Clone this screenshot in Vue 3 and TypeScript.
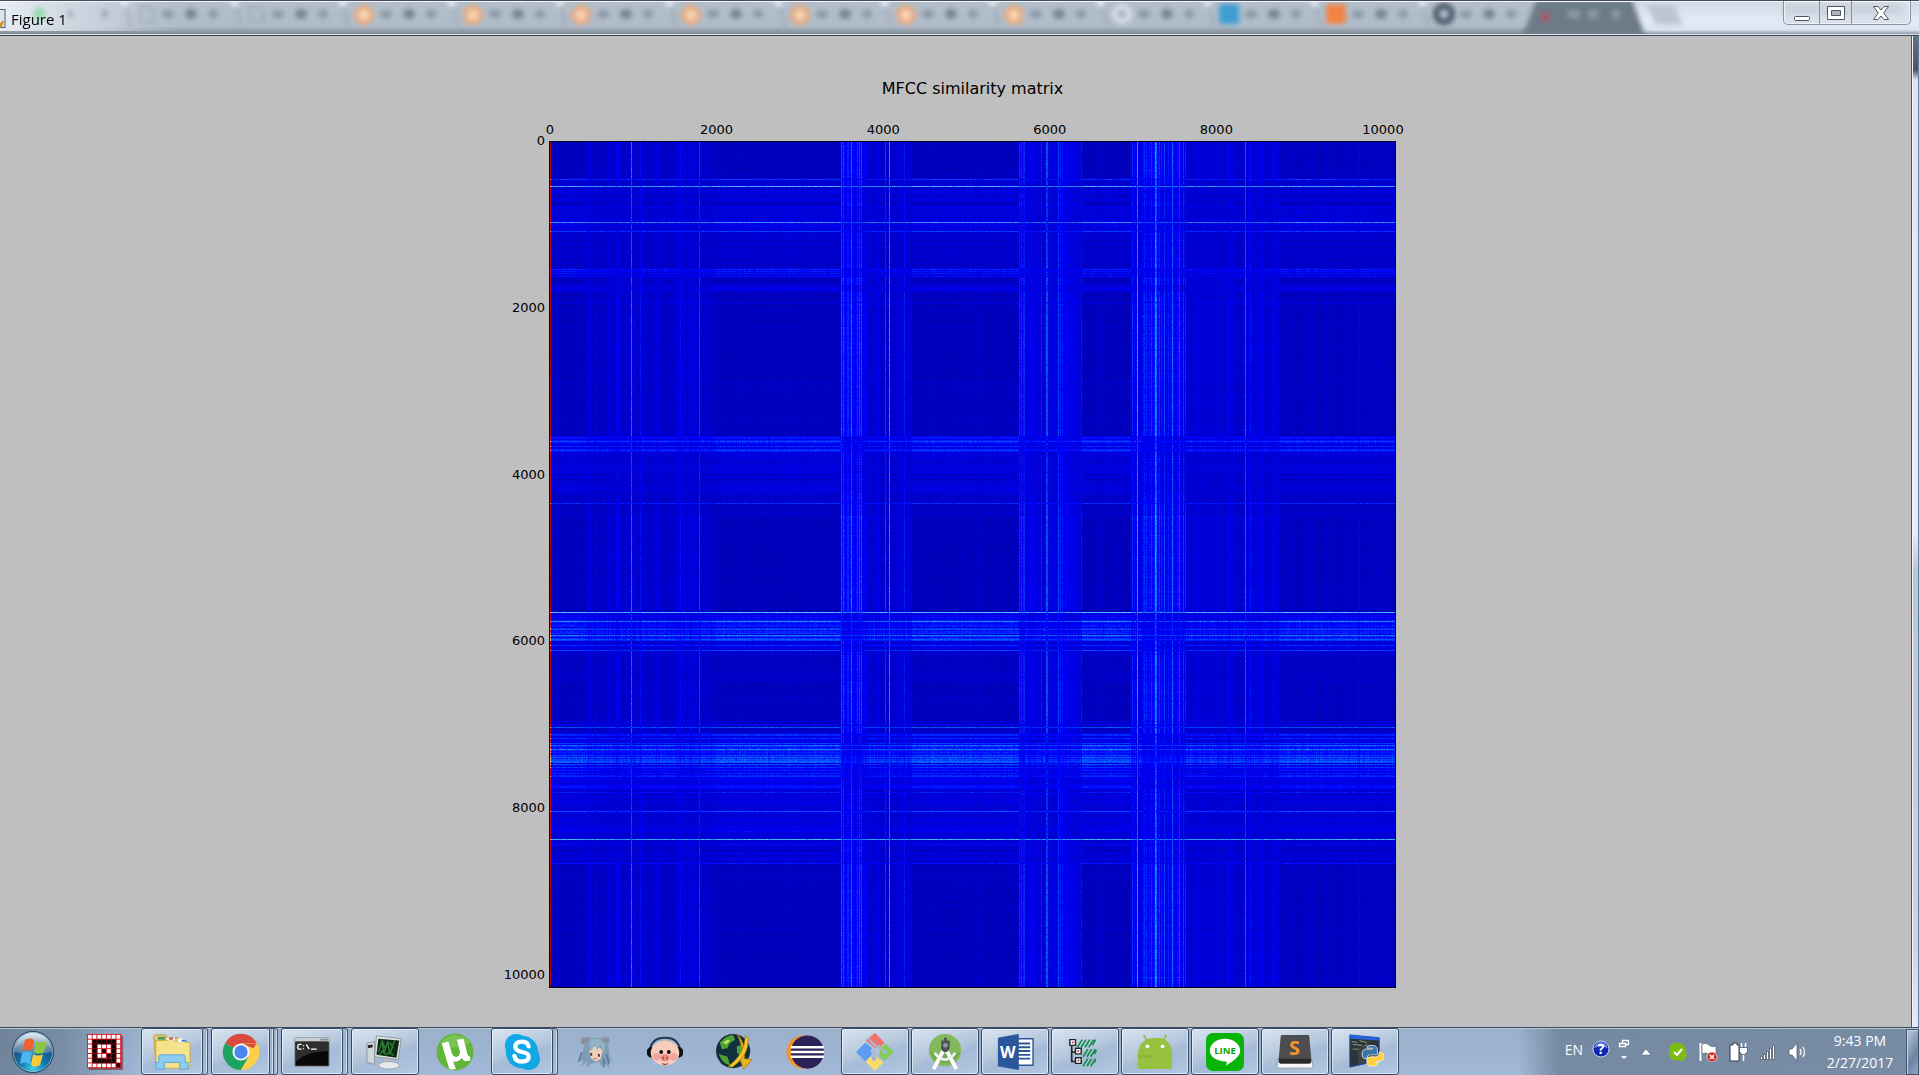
<script setup lang="ts">
import { onMounted, ref } from 'vue'

type Span = [start: number, end: number, level: number]
type Line = [position: number, level: number]

const SIZE = 845
const ticks = ['0', '2000', '4000', '6000', '8000', '10000']
const matrix = ref<HTMLCanvasElement | null>(null)

const columnSpans: Span[] = [
  [0, 37, 0.1], [37, 62, 0.3], [62, 90, 0.42], [90, 124, 0.22], [124, 150, 0.36], [150, 166, 0.2],
  [166, 291, 0.04], [291, 317, 0.8], [317, 334, 0.36], [334, 362, 0.4], [362, 469, 0.06],
  [469, 475, 0.95], [475, 490, 0.55], [490, 532, 0.52], [532, 581, 0.08], [581, 592, 0.4],
  [592, 635, 0.85], [635, 668, 0.36], [668, 727, 0.42], [727, 845, 0.14],
]
const columnLines: Line[] = [
  [38, 0.9], [45, 0.8], [55, 0.7], [66, 0.85], [81, 1.6], [85, 0.9], [90, 1.05], [106, 0.7],
  [130, 1], [140, 0.8], [149, 1.35], [161, 0.7], [191, 0.25], [291, 1.5], [293, 1.4], [297, 1.2],
  [301, 1.6], [307, 1.3], [309, 1.4], [311, 1.4], [335, 1.35], [339, 1.8], [346, 0.7], [354, 1.15],
  [359, 0.7], [414, 0.3], [445, 0.3], [469, 1.25], [471, 1.25], [473, 1.2], [484, 0.9], [491, 1.15],
  [496, 1.5], [497, 1.4], [508, 1.4], [510, 1.2], [512, 1.1], [516, 1], [520, 0.9], [531, 1.1],
  [582, 1.25], [584, 1], [587, 1.85], [594, 1.25], [596, 1.2], [601, 1.25], [605, 1.8], [606, 1.6],
  [609, 1.3], [614, 1.4], [622, 1.65], [626, 0.9], [633, 1.3], [635, 1.2], [658, 0.7], [668, 0.65],
  [678, 0.7], [682, 0.8], [695, 1.55], [700, 1.1], [710, 0.7], [723, 0.95], [727, 0.5], [744, 0.4],
  [752, 0.35], [776, 0.35], [809, 0.65],
]
const rowSpans: Span[] = [
  [0, 36, 0.08], [36, 64, 0.36], [64, 76, 0.42], [76, 90, 0.55], [90, 126, 0.3], [126, 135, 0.55],
  [135, 143, 0.18], [143, 150, 0.5], [150, 160, 0.08], [160, 240, 0.06], [240, 294, 0.08],
  [294, 305, 0.85], [305, 312, 0.75], [312, 330, 0.5], [330, 362, 0.36], [362, 374, 0.15],
  [374, 470, 0.03], [470, 486, 0.75], [486, 499, 1.05], [499, 510, 0.5], [510, 540, 0.18],
  [540, 579, 0.06], [579, 591, 0.2], [591, 612, 0.9], [612, 620, 1.05], [620, 645, 0.8],
  [645, 669, 0.45], [669, 697, 0.44], [697, 722, 0.38], [722, 748, 0.14], [748, 845, 0.06],
]
const rowLines: Line[] = [
  [37, 1.3], [44, 2], [50, 0.8], [57, 0.7], [65, 0.85], [80, 1.85], [84, 0.95], [89, 1.35],
  [94, 0.6], [103, 0.55], [109, 0.5], [127, 1.2], [129, 1.1], [134, 1.05], [147, 0.7], [160, 0.9],
  [256, 0.3], [307, 1.2], [309, 1.1], [330, 0.7], [346, 0.8], [361, 1.25], [372, 0.6], [470, 2.15],
  [475, 1.1], [479, 1.75], [480, 1.2], [487, 1.5], [491, 1.25], [494, 1.3], [497, 1.5], [498, 1.35],
  [503, 1.25], [508, 1.4], [512, 0.7], [579, 0.7], [582, 0.95], [585, 1.5], [592, 1.25], [593, 1.2],
  [601, 1.35], [604, 1.2], [607, 1.7], [614, 1.2], [617, 1.45], [618, 1.4], [619, 1.55], [631, 1.2],
  [633, 1.2], [645, 1.1], [650, 1.15], [654, 0.8], [669, 1.45], [678, 0.8], [697, 2.05], [702, 1],
  [711, 0.95], [721, 1.1], [746, 0.28], [805, 0.22], [835, -0.15],
]

function createRandom(seed: number): () => number {
  let state = seed
  return () => {
    state = (state * 1664525 + 1013904223) >>> 0
    return state / 4294967296
  }
}

function profile(spans: Span[], lines: Line[], random: () => number): number[] {
  const values: number[] = new Array(SIZE).fill(0)
  for (const [start, end, level] of spans) {
    for (let i = start; i < end; i++) {
      const spike = Math.pow(random(), 4) * (0.16 + level * 0.5)
      values[i] = level + spike + (random() - 0.5) * (0.16 + level * 0.5)
    }
  }
  for (const [position, level] of lines) values[position] = level
  return values
}

function drawMatrix(canvas: HTMLCanvasElement): void {
  const context = canvas.getContext('2d')
  if (!context) return
  const random = createRandom(27)
  const columns = profile(columnSpans, columnLines, random)
  const rows = profile(rowSpans, rowLines, random)
  const image = context.createImageData(SIZE, SIZE)
  for (let y = 0; y < SIZE; y++) {
    for (let x = 0; x < SIZE; x++) {
      const spread = Math.abs(columns[x] - rows[y])
      const shared = Math.min(Math.max(columns[x], 0), Math.max(rows[y], 0))
      const value = spread + shared * 0.56 + (random() - 0.5) * (0.08 + spread * 0.16)
      const over = Math.max(0, value - 0.95)
      const offset = (y * SIZE + x) * 4
      let red = Math.max(0, (over - 0.5) * 110)
      let green = Math.min(210, over * 165)
      let blue = Math.min(255, 180 + value * 78)
      if (x === 0) {
        red = 175 + rows[y] * 40
        green = rows[y] > 1.2 ? 200 : 0
        blue = 10 + rows[y] * 60
      }
      image.data[offset] = red
      image.data[offset + 1] = green
      image.data[offset + 2] = blue
      image.data[offset + 3] = 255
    }
  }
  context.putImageData(image, 0, 0)
}

onMounted(() => {
  if (matrix.value) drawMatrix(matrix.value)
})

type TabKind = 'page' | 'round' | 'white' | 'blue' | 'square' | 'cat'
const tabs: { x: number; kind: TabKind }[] = [
  { x: 124, kind: 'page' }, { x: 234, kind: 'page' }, { x: 342, kind: 'round' },
  { x: 451, kind: 'round' }, { x: 559, kind: 'round' }, { x: 669, kind: 'round' },
  { x: 778, kind: 'round' }, { x: 884, kind: 'round' }, { x: 992, kind: 'round' },
  { x: 1100, kind: 'white' }, { x: 1207, kind: 'blue' }, { x: 1314, kind: 'square' },
  { x: 1422, kind: 'cat' },
]

type AppState = 'pinned' | 'open' | 'stack' | 'triple'
const apps: { id: string; name: string; state: AppState }[] = [
  { id: 'grid', name: 'Pixel grid', state: 'pinned' },
  { id: 'explorer', name: 'Windows Explorer', state: 'stack' },
  { id: 'chrome', name: 'Google Chrome', state: 'triple' },
  { id: 'cmd', name: 'Command Prompt', state: 'stack' },
  { id: 'monitor', name: 'System Monitor', state: 'open' },
  { id: 'torrent', name: 'uTorrent', state: 'pinned' },
  { id: 'skype', name: 'Skype', state: 'stack' },
  { id: 'girl', name: 'Mascot', state: 'pinned' },
  { id: 'pig', name: 'Music player', state: 'pinned' },
  { id: 'globe', name: 'Download manager', state: 'pinned' },
  { id: 'eclipse', name: 'Eclipse', state: 'pinned' },
  { id: 'git', name: 'Git', state: 'open' },
  { id: 'studio', name: 'Android Studio', state: 'open' },
  { id: 'word', name: 'Word', state: 'open' },
  { id: 'tree', name: 'Tree compare', state: 'open' },
  { id: 'android', name: 'Android', state: 'open' },
  { id: 'line', name: 'LINE', state: 'open' },
  { id: 'sublime', name: 'Sublime Text', state: 'open' },
  { id: 'python', name: 'Python', state: 'open' },
]

const gridPattern = ['wwwwwww', 'wkkkkkw', 'wkwwwkw', 'wkwkwkw', 'wkwwkkw', 'wkkkkkw', 'wwwwwwk']
const gridDots = gridPattern.flatMap((row, y) =>
  [...row].map((cell, x) => ({ x: x * 5, y: y * 5, fill: cell === 'w' ? '#fff' : '#160406' })),
)
</script>

<template>
  <div class="desktop">
    <header class="titlebar">
      <svg class="glass" viewBox="0 2 1919 33" preserveAspectRatio="xMinYMin slice" aria-hidden="true">
        <defs>
          <filter id="soft" x="-20%" y="-20%" width="140%" height="140%"><feGaussianBlur stdDeviation="2.4" /></filter>
          <filter id="softer" x="-20%" y="-50%" width="140%" height="200%"><feGaussianBlur stdDeviation="2" /></filter>
          <linearGradient id="tabFill" x1="0" x2="0" y1="0" y2="1">
            <stop offset="0" stop-color="#b2bfcb" /><stop offset=".75" stop-color="#b0bcc9" /><stop offset="1" stop-color="#78848f" />
          </linearGradient>
          <linearGradient id="leftGlow"><stop offset="0" stop-color="#e8edf6" /><stop offset=".6" stop-color="#ccd4de" stop-opacity=".7" /><stop offset="1" stop-color="#b2bfcb" stop-opacity="0" /></linearGradient>
          <linearGradient id="rightGlow" x1="0" x2="0" y1="0" y2="1"><stop offset="0" stop-color="#cfd8e4" /><stop offset=".6" stop-color="#e4ebf7" /><stop offset=".85" stop-color="#dbe4f0" /><stop offset="1" stop-color="#7d8b9a" /></linearGradient>
          <radialGradient id="roundFill"><stop offset="0" stop-color="#fff3de" /><stop offset=".4" stop-color="#f2c6a2" /><stop offset="1" stop-color="#e79c6c" /></radialGradient>
        </defs>
        <rect width="1919" height="35" fill="url(#tabFill)" />
        <rect width="190" height="31" fill="url(#leftGlow)" />
        <rect x="1630" width="289" height="35" fill="url(#rightGlow)" />
        <g filter="url(#soft)">
          <path d="M1522 38 L1536 0 H1632 L1646 38Z" fill="#6d7a88" />
          <path d="M1646 5 H1674 L1683 25 H1656Z" fill="#bcc6d3" />
          <ellipse cx="39" cy="14" rx="6" ry="7" fill="#9adcb0" />
          <rect x="68" y="10" width="4" height="8" fill="#9ba6b1" />
          <rect x="102" y="10" width="6" height="8" fill="#9ba6b1" />
          <g v-for="tab in tabs" :key="tab.x" :transform="`translate(${tab.x} 0)`">
            <path d="M-5 0 H6 L1 8Z" fill="#eef3fb" />
            <path d="M2 6 L7 28" stroke="#98a5b3" stroke-width="2" />
            <circle v-if="tab.kind === 'round'" cx="22" cy="15" r="10" fill="url(#roundFill)" />
            <circle v-else-if="tab.kind === 'white'" cx="22" cy="14" r="10" fill="#d8deea" />
            <path v-else-if="tab.kind === 'page'" d="M16 7 H25 L29 11 V22 H16Z" fill="none" stroke="#9aa7b4" stroke-width="2" />
            <circle v-else-if="tab.kind === 'cat'" cx="22" cy="14" r="8" fill="none" stroke="#4c5967" stroke-width="6" />
            <rect v-else x="12" y="4" width="20" height="20" rx="3" :fill="tab.kind === 'blue' ? '#3c9dd3' : '#f28445'" />
            <ellipse v-if="tab.kind === 'white'" cx="22" cy="14" rx="4" ry="4" fill="#9ba7b6" />
            <ellipse cx="44" cy="14" rx="6" ry="4" fill="#8895a2" />
            <ellipse cx="67" cy="14" rx="6" ry="5" fill="#76838f" />
            <ellipse cx="89" cy="14" rx="5" ry="4" fill="#8895a2" />
          </g>
          <circle cx="1545" cy="17" r="4" fill="#b24a5c" />
          <path d="M1568 14 H1580 M1588 14 H1598 M1612 14 H1620" stroke="#8d99a5" stroke-width="8" />
          <rect x="1783" y="2" width="120" height="12" fill="#c1cbd7" />
        </g>
        <path d="M1717 8 H1745 M1754 8 H1779" stroke="#8894a3" stroke-width="9" filter="url(#softer)" />
      </svg>
      <svg class="app-icon" viewBox="0 0 6 20" aria-hidden="true">
        <rect x="-8" y=".5" width="13" height="18" fill="#dfe3e6" stroke="#43637e" />
        <path d="M-2 11 L1 17 L3 12" fill="none" stroke="#d98a12" stroke-width="2" />
      </svg>
      <h1>Figure 1</h1>
      <div class="controls">
        <button type="button" class="minimize" aria-label="Minimize">
          <svg viewBox="0 0 18 18" aria-hidden="true"><rect x="1.5" y="12.500" width="15" height="4" rx="1" fill="#fff" stroke="#4d5661" /></svg>
        </button>
        <button type="button" class="maximize" aria-label="Maximize">
          <svg viewBox="0 0 18 18" aria-hidden="true"><path d="M.5 2.500h17v13H.5z" fill="#fff" stroke="#4d5661" /><path d="M4.500 6.500h9v5h-9z" fill="#a9b5c2" stroke="#4d5661" /></svg>
        </button>
        <button type="button" class="close" aria-label="Close">
          <svg viewBox="0 0 18 18" aria-hidden="true"><path d="M1.500 2.500h4.500l3 3.500 3-3.500h4.500l-4.800 6.500 4.800 6.500H12l-3-3.500-3 3.500H1.500L6.300 9z" fill="#fff" stroke="#4d5661" /></svg>
        </button>
      </div>
    </header>

    <main class="window">
      <figure class="figure">
        <figcaption>MFCC similarity matrix</figcaption>
        <div class="x-axis"><span v-for="tick in ticks" :key="tick">{{ tick }}</span></div>
        <div class="y-axis"><span v-for="tick in ticks" :key="tick">{{ tick }}</span></div>
        <canvas ref="matrix" class="matrix" :width="SIZE" :height="SIZE" role="img" aria-label="MFCC similarity matrix"></canvas>
      </figure>
      <div class="edge"></div>
    </main>

    <footer class="taskbar">
      <button type="button" class="start" aria-label="Start">
        <svg viewBox="0 0 44 44" aria-hidden="true">
          <defs>
            <radialGradient id="orb" cx=".5" cy=".9" r=".9"><stop offset="0" stop-color="#3cd0e8" /><stop offset=".35" stop-color="#0c76ad" /><stop offset=".7" stop-color="#1c4f7c" /><stop offset="1" stop-color="#9ab9cf" /></radialGradient>
            <linearGradient id="orbShine" x1="0" x2="0" y1="0" y2="1"><stop offset="0" stop-color="#fff" stop-opacity=".75" /><stop offset="1" stop-color="#fff" stop-opacity=".2" /></linearGradient>
          </defs>
          <circle cx="22" cy="22" r="20.500" fill="url(#orb)" stroke="#213e5a" />
          <circle cx="22" cy="22" r="19.500" fill="none" stroke="#a9cbe0" opacity=".7" />
          <path d="M3 22A19 19 0 0 1 41 22Q22 26 3 22Z" fill="url(#orbShine)" />
          <path d="M14 10q5-3 9 0l-2 11q-5-3-10 0z" fill="#f0602a" />
          <path d="M25 11q5 3 11 0l-3 11q-5 3-10 0z" fill="#8fc63d" />
          <path d="M11 23q5-3 10 0l-2 11q-5-3-10 0z" fill="#4fb5ee" />
          <path d="M22 24q5 3 10 0l-3 11q-5 3-9 0z" fill="#fcc93a" />
        </svg>
      </button>

      <nav class="apps" aria-label="Running programs">
        <button v-for="app in apps" :key="app.id" type="button" :class="['app', app.state]" :aria-label="app.name">
          <span class="face">
            <svg viewBox="0 0 40 40" aria-hidden="true">
              <g v-if="app.id === 'grid'">
                <path d="M3 3h36v36H3z" fill="#6b2a33" opacity=".6" /><path d="M1 1h36v36H1z" fill="#d9141c" />
                <rect v-for="(dot, i) in gridDots" :key="i" :x="dot.x + 2" :y="dot.y + 2" width="4" height="4" :fill="dot.fill" />
                <path d="M7 7h24v5H7zM7 27h24v5H7zM7 7h5v24H7zM27 7h5v24h-5z" fill="#160406" opacity=".65" />
              </g>
              <g v-else-if="app.id === 'explorer'">
                <path d="M1 4q0-2 2-2h10l3 3h10v30H3z" fill="#e8cf6c" stroke="#b99b3c" /><path d="M5 4h8v3H5z" fill="#4d9a63" />
                <path d="M13 8h11l3 2h12v27H3V8z" fill="#f6e28a" stroke="#c9ab4a" /><path d="M15 5h8v3h-8z" fill="#fff" /><path d="M17 5h4v2h-4z" fill="#c8463c" /><path d="M26 6h8v4h-8z" fill="#fff" /><path d="M30 7h5v2h-5z" fill="#3b79b8" />
                <path d="M3 38V31h3v-6q0-2 2-2h24q2 0 2 2v6h3v7h-9v-7H12v7z" fill="#8ecdf0" stroke="#5ba7d6" />
              </g>
              <g v-else-if="app.id === 'chrome'">
                <circle cx="20" cy="20" r="19" fill="#fbd04b" /><path d="M20 20L3.500 10.500A19 19 0 0 1 36.500 10.500H20Z" fill="#db4a3e" /><path d="M20 20L3.500 10.500A19 19 0 0 0 20 39L28 25Z" fill="#1fa363" />
                <path d="M20 39L28.500 24.500 36.500 10.500A19 19 0 0 1 20 39Z" fill="#fbd04b" /><path d="M20 11H36.500L33 16Z" fill="#db4a3e" /><circle cx="20" cy="20" r="9" fill="#f5f7fb" /><circle cx="20" cy="20" r="7" fill="#4a86ee" />
              </g>
              <g v-else-if="app.id === 'cmd'">
                <path d="M2 5h36v30H2z" fill="#080808" stroke="#90979f" /><path d="M2 5h36v4H2z" fill="#c9ced4" /><path d="M29 6h2v2h-2zM32 6h2v2h-2zM35 6h2v2h-2z" fill="#707780" />
                <path d="M3 9h34v10Q15 19 3 30z" fill="#4a4a4a" opacity=".6" />
                <path d="M9 12H7q-2 0-2 2v1q0 2 2 2h2M11 13v1M11 16v1M14 12l3 5M19 17h6" fill="none" stroke="#fff" stroke-width="1.400" />
              </g>
              <g v-else-if="app.id === 'monitor'">
                <path d="M1 11l8-2v24l-8-2z" fill="#d2d7db" stroke="#8d959c" /><path d="M2 13l5-1v3l-5 1z" fill="#222" /><path d="M11 3l26 3-3 22-25-3z" fill="#dfe3e6" stroke="#8d959c" /><path d="M13 6l22 2-3 18-21-3z" fill="#0c2814" />
                <path d="M13 20l4-11 2 12 4-12 2 13 5-14M14 23l3-4 4 4 4-3 4 4M17 8l3 8M25 10l4 6" fill="none" stroke="#2b7d33" stroke-width="1.500" /><path d="M19 27l6 1v5h-6z" fill="#b7bdc2" /><ellipse cx="24" cy="34" rx="11" ry="4" fill="#e6e9eb" stroke="#9ba3aa" />
              </g>
              <g v-else-if="app.id === 'torrent'">
                <circle cx="20" cy="20" r="19.500" fill="#62b43b" /><path d="M4 11A19.500 19.500 0 0 1 36 10Q20 20 4 11Z" fill="#8bcc62" opacity=".6" />
                <path d="M6 11l7-2 4 13q2 4 5 3 4-1 3-6l-3-12 7-1 4 16q1 3 3 3v4q-7 2-9-3-3 5-9 4l3 8q-4 1-7 0z" fill="#fff" />
              </g>
              <g v-else-if="app.id === 'skype'">
                <circle cx="14" cy="13" r="12" fill="#12a8e6" /><circle cx="27" cy="27" r="12" fill="#12a8e6" /><circle cx="20" cy="20" r="17" fill="#12a8e6" />
                <path d="M27 14q-1-5-7-5-7 0-7 5.500 0 4 7 5.500 7 1 7 5 0 5-7 5-7 0-8-6" fill="none" stroke="#fff" stroke-width="4.500" stroke-linecap="round" />
              </g>
              <g v-else-if="app.id === 'girl'">
                <path d="M6 5l9-1-1 7-9 1zM28 4l7 1v6l-6-1z" fill="#8a919b" /><path d="M9 13Q14 4 22 5q9 0 12 9l2 12 3 5-5-2 1 8-5-6-2 5-4-6-7 2-6 4 1-6-6 5 2-7-7 3 5-7z" fill="#7e9db4" />
                <path d="M14 19q3-5 7-5t7 5l-2 8-5 3-5-3z" fill="#efd0b9" /><path d="M11 20l4-9 1 9 4-9 2 8 4-7 3 9 2-9-7-6-9 1z" fill="#94b3c7" /><path d="M16 21v3M24 22v3" stroke="#4e3530" stroke-width="2" /><path d="M18 27h4" stroke="#d16955" />
                <path d="M6 20l-3 10M32 22l3 11M29 27l1 9" stroke="#557a97" stroke-width="1.500" />
              </g>
              <g v-else-if="app.id === 'pig'">
                <path d="M4 18Q6 5 20 5t16 13" fill="none" stroke="#23354c" stroke-width="2" /><path d="M1 18q2-4 6-3v11q-5 0-6-4zM39 18q-2-4-6-3v11q5 0 6-4z" fill="#111" />
                <ellipse cx="20" cy="21" rx="15" ry="13" fill="#f7cdbd" /><circle cx="11" cy="25" r="4" fill="#f2a59c" /><circle cx="29" cy="25" r="4" fill="#f2a59c" /><ellipse cx="20" cy="26" rx="5" ry="4" fill="#ef8b82" />
                <path d="M18 25v3M22 25v3M17 32q3 2 6 0" stroke="#a03b36" fill="none" stroke-width="1.300" /><circle cx="16" cy="20" r="2" fill="#111" /><circle cx="24" cy="20" r="2" fill="#111" />
              </g>
              <g v-else-if="app.id === 'globe'">
                <circle cx="18" cy="19" r="18" fill="#12303c" /><path d="M4 10q7-8 14-8l2 5-6 4-2 5-6 1zM3 22l9 3 3 9q-9-2-12-12zM22 14l7-2 3 7-5 5-5-3z" fill="#4fa037" />
                <path d="M7 10l5-3 3 1-4 4z" fill="#b7e05a" /><path d="M22 1q9 8 8 26l8 1-9 10-4-11 3-1Q28 12 22 1z" fill="#eab51c" stroke="#a8780d" stroke-width=".8" /><path d="M31 3q-1 20-18 32l4 1Q35 24 34 5z" fill="#f3c52d" stroke="#a8780d" stroke-width=".8" />
              </g>
              <g v-else-if="app.id === 'eclipse'">
                <circle cx="18" cy="20" r="17.500" fill="#f3952b" /><circle cx="22.500" cy="20" r="17.500" fill="#2d2257" /><path d="M5 15h35M5 20h35M5 25h35" stroke="#fff" stroke-width="2.500" />
              </g>
              <g v-else-if="app.id === 'git'">
                <path d="M20 0l10 10-6 6q-2-2-4 0l-10-8z" fill="#f4706c" /><path d="M31 11l9 9-10 9-6-5q3-3 0-6z" fill="#82ce55" /><path d="M20 24l3 2 6 5-9 9-10-10 5-5q3 2 5-1z" fill="#f7dc6c" /><path d="M10 10l7 6q-3 3 0 6l-7 8L0 20z" fill="#5c9cf3" />
                <path d="M13 6l10 10M19 17v11M23 13l7 7" stroke="#a7b7c9" stroke-width="2.500" /><circle cx="19" cy="27" r="2.500" fill="#a7b7c9" /><circle cx="30" cy="20" r="2.500" fill="#a7b7c9" />
              </g>
              <g v-else-if="app.id === 'studio'">
                <circle cx="20" cy="18" r="17" fill="#83b95a" /><path d="M4 20q16 7 32 0A17 17 0 0 1 4 20z" fill="#6ea846" /><path d="M19 17L8 38M21 17l11 21" stroke="#fff" stroke-width="4" /><path d="M9 21q11 14 22 0" fill="none" stroke="#eef2f4" stroke-width="3" />
                <path d="M16 8h3V5h3v3h3v6q0 4-3 6h-3q-4-2-3-6z" fill="#4f5357" /><circle cx="20.500" cy="13" r="2.500" fill="#949a9e" />
              </g>
              <g v-else-if="app.id === 'word'">
                <path d="M20 6h19v28H20z" fill="#fff" stroke="#2b569a" stroke-width="1.500" /><path d="M23 11h13M23 15h13M23 19h13M23 23h13M23 27h13" stroke="#2b569a" stroke-width="2" /><path d="M2 5l22-4v38L2 35z" fill="#2b579a" />
                <text x="12.500" y="26" text-anchor="middle" class="glyph word-letter">W</text>
              </g>
              <g v-else-if="app.id === 'tree'">
                <path d="M6 12v18h8M6 20h8" fill="none" stroke="#20262b" stroke-width="1.800" /><path d="M12 15l5-8M16 15l5-8M20 15l5-8M24 15l5-8M28 13l3-6M18 25l5-8M22 25l5-8M26 25l5-8M30 22l2-4M18 35l5-8M22 35l5-8M26 35l5-8M30 31l1-3" stroke="#1c8c4f" stroke-width="1.800" />
                <path d="M4 7h6v6H4zM10 16h6v6h-6zM10 26h6v6h-6z" fill="#fff" stroke="#20262b" stroke-width="1.500" /><path d="M6.500 9.500h1v1h-1zM12.500 18.500h1v1h-1zM12.500 28.500h1v1h-1z" fill="#b22b2b" stroke="#b22b2b" />
              </g>
              <g v-else-if="app.id === 'android'">
                <path d="M8 2l4 7M32 2l-4 7" stroke="#8cba3a" stroke-width="1.500" /><path d="M2 22Q3 6 20 5t18 17v14q0 2-2 2H4q-2 0-2-2z" fill="#96c23f" /><path d="M2 23h18l-3 3H2z" fill="#85ad3b" opacity=".6" /><circle cx="12" cy="14" r="2" fill="#fff" /><circle cx="28" cy="14" r="2" fill="#fff" />
              </g>
              <g v-else-if="app.id === 'line'">
                <rect width="40" height="40" rx="7" fill="#08b408" /><path d="M20 6c9 0 16 5.500 16 12.500 0 6-6 10-15 16 1-2 1-4 0-4.500C11 30 4 25 4 18.500 4 11.500 11 6 20 6z" fill="#fff" /><text x="20" y="22" text-anchor="middle" class="glyph line-word">LINE</text>
              </g>
              <g v-else-if="app.id === 'sublime'">
                <path d="M3 26h34l2 9q0 2-2 2H3q-2 0-2-2z" fill="#f4f6f7" stroke="#8f989f" /><path d="M5 3q0-1 2-1h26q2 0 2 1l2 23v4q0 2-2 2H5q-2 0-2-2v-4z" fill="#4d4d4f" /><path d="M3 27h34v3q0 2-2 2H5q-2 0-2-2z" fill="#29292b" />
                <text x="19.500" y="23" text-anchor="middle" class="glyph sublime-letter">S</text>
              </g>
              <g v-else-if="app.id === 'python'">
                <path d="M4 2l31 3v24L4 36z" fill="#2b333b" stroke="#2450b3" /><path d="M4 2l31 3v3L4 6z" fill="#2a62e0" /><path d="M6 9l6 1M14 8l8 2M7 12l10 1M20 13l6 1M7 17h6" stroke="#9fa06a" /><path d="M12 17l12-9v23l-11 2z" fill="#5c6c74" opacity=".3" />
                <path d="M27 13q6 0 6 4v6h-8q-3 0-3 4h-2q-3 0-3-5t4-5h7v-1h-6q0-3 5-3z" fill="#3a74a8" stroke="#eef3f7" stroke-width=".8" /><path d="M28 35q-6 0-6-4v-3q0-3 4-3h5q4 0 4-5h2q3 1 3 5t-4 5h-5v1h3q0 4-6 4z" fill="#ffd03f" stroke="#eef3f7" stroke-width=".8" />
              </g>
            </svg>
          </span>
        </button>
      </nav>

      <div class="tray">
        <button type="button" class="language">EN</button>
        <button type="button" aria-label="Help" class="help">
          <svg width="18" height="18" viewBox="0 0 18 18" aria-hidden="true"><circle cx="9" cy="9" r="8" fill="#1226b4" stroke="#c9d4ea" /><path d="M2 8Q4 2 9 2t7 6Q9 5 2 8z" fill="#6f87ea" /><text x="9" y="14" text-anchor="middle" class="glyph help-mark">?</text></svg>
        </button>
        <button type="button" aria-label="Language bar options" class="options">
          <svg width="12" height="24" viewBox="0 0 12 24" aria-hidden="true"><path d="M4.500 4V1.500h6v4H8M1.500 4.500h6v3h-6z" fill="none" stroke="#fff" stroke-width="1.300" /><path d="M3 17h6l-3 3z" fill="#fff" /></svg>
        </button>
        <button type="button" aria-label="Show hidden icons" class="more">
          <svg width="12" height="8" viewBox="0 0 12 8" aria-hidden="true"><path d="M1 7l5-6 5 6z" fill="#fff" stroke="#59687a" stroke-width=".6" /></svg>
        </button>
        <button type="button" aria-label="Skype: online">
          <svg width="20" height="20" viewBox="0 0 20 20" aria-hidden="true"><path d="M6 1q5-1 8 1 5 3 4 8 2 5-2 8-3 2-7 0-5 1-7-3-2-3-1-6-1-6 5-8z" fill="#7cbb16" /><path d="M6 10l3 3 5-6" fill="none" stroke="#fff" stroke-width="2" /></svg>
        </button>
        <button type="button" aria-label="Action center">
          <svg width="20" height="20" viewBox="0 0 20 20" aria-hidden="true"><path d="M2.500 1v18" stroke="#fff" stroke-width="2" /><path d="M4 2q4-2 7 1t7 1v9q-4 1-7-1t-7 0z" fill="#fff" stroke="#4a5867" stroke-width=".6" /><circle cx="14" cy="15" r="5" fill="#d92c25" stroke="#fff" stroke-width=".6" /><path d="M12 13l4 4M16 13l-4 4" stroke="#fff" stroke-width="1.600" /></svg>
        </button>
        <button type="button" aria-label="Power">
          <svg width="20" height="20" viewBox="0 0 20 20" aria-hidden="true"><path d="M5 1h4v2h2v16H2V3h3z" fill="#fff" stroke="#323d49" /><path d="M13.500 1v5M17.500 1v5M15.500 12v7" stroke="#fff" stroke-width="1.500" /><path d="M11.500 5.500h8v4l-2.500 3h-3l-2.500-3z" fill="#fff" stroke="#465462" stroke-width=".8" /></svg>
        </button>
        <button type="button" aria-label="Network">
          <svg width="20" height="20" viewBox="0 0 20 20" aria-hidden="true"><path d="M2.500 14.500h2v3h-2zM5.500 12.500h2v5h-2zM8.500 9.500h2v8h-2zM11.500 6.500h2v11h-2zM14.500 3.500h2v14h-2z" fill="#fff" stroke="#46525f" stroke-width=".7" /></svg>
        </button>
        <button type="button" aria-label="Volume">
          <svg width="20" height="20" viewBox="0 0 20 20" aria-hidden="true"><path d="M1 7h3l5-6v18l-5-6H1z" fill="#fff" stroke="#46525f" stroke-width=".7" /><path d="M12 7q2 3 0 6M15 5q3 5 0 10" fill="none" stroke="#e9eff4" stroke-width="1.400" /></svg>
        </button>
        <button type="button" class="clock"><time datetime="21:43">9:43 PM</time><time datetime="2017-02-27">2/27/2017</time></button>
        <button type="button" class="show-desktop" aria-label="Show desktop"></button>
      </div>
    </footer>
  </div>
</template>

<style>
body { margin: 0; background: #bfbfbf; }
</style>

<style scoped>
.desktop { min-height: 100vh; display: flex; flex-direction: column; box-sizing: border-box; overflow: hidden; font-family: "Open Sans", "Noto Sans", sans-serif; color: #000; }
button { border: 0; padding: 0; background: none; font: inherit; color: inherit; display: flex; align-items: center; justify-content: center; }
svg { display: block; }

.titlebar { position: relative; height: 36px; box-sizing: border-box; display: flex; align-items: flex-start; border-top: 1px solid #454b5a; border-bottom: 1px solid #3c4554; box-shadow: inset 0 1px #f3f6fb, inset 0 -1px #dbe2ea; }
.glass { position: absolute; inset: 1px 0 1px 0; width: 100%; height: 32px; }
.app-icon { position: relative; width: 6px; height: 20px; margin-top: 8px; }
h1 { position: relative; flex: 1; margin: 0; padding: 8px 0 0 5px; font-size: 15px; line-height: 20px; font-weight: 400; }
.controls { position: relative; display: flex; height: 23px; margin-right: 8px; border: 1px solid #8793a3; border-top: 0; border-radius: 0 0 5px 5px; box-shadow: inset 0 0 0 1px rgba(255, 255, 255, 0.6); background: linear-gradient(rgba(255, 255, 255, 0.25), rgba(190, 200, 214, 0.35)); }
.controls button { width: 32px; }
.controls button + button { border-left: 1px solid #8793a3; }
.controls .minimize { width: 35px; }
.controls .close { width: 59px; }
.controls svg { width: 18px; height: 18px; }

.window { flex: 1; display: flex; background: #bfbfbf; }
.figure { flex: 1; margin: 0; padding: 40px 0 20px; display: grid; grid-template-columns: 549fr 847px 515fr; grid-template-rows: 26px 39px auto; align-content: start; font-family: "DejaVu Sans", sans-serif; }
figcaption { grid-area: 1 / 2; text-align: center; font-size: 16px; line-height: 26px; }
.x-axis { grid-area: 2 / 2; display: flex; justify-content: space-between; align-items: flex-end; padding: 0 13px 3px 1px; font-size: 13px; line-height: 16px; }
.x-axis span { width: 0; display: flex; justify-content: center; }
.y-axis { grid-area: 3 / 1; display: flex; flex-direction: column; justify-content: space-between; padding: 0 4px 13px 0; font-size: 13px; line-height: 16px; }
.y-axis span { height: 0; display: flex; align-items: center; justify-content: flex-end; }
.matrix { grid-area: 3 / 2; display: block; border: 1px solid #000018; }
.edge { width: 6px; border-left: 1px solid #49566a; box-shadow: inset 1px 0 #f2f6fa; background: linear-gradient(#66727f, #4a5563 34px, #dce5f0 44px, #e6edf6 50%, #b9c6d8 54%, #cbd6e4 92%, #e4ebf5); border-right: 1px solid #68809c; }

.taskbar { height: 48px; box-sizing: border-box; display: flex; border-top: 1px solid #3b4c61; box-shadow: inset 0 1px #b9c8d9; background: linear-gradient(90deg, rgba(104, 123, 146, 0.85), rgba(104, 123, 146, 0.7) 60px, rgba(104, 123, 146, 0) 140px, rgba(104, 123, 146, 0) calc(100% - 400px), rgba(104, 123, 146, 0.75) calc(100% - 360px), rgba(104, 123, 146, 0.7)), linear-gradient(#9ab0cb, #a1b8d7); }
.start { width: 70px; padding-right: 4px; }
.start svg { width: 44px; height: 44px; }
.apps { flex: 1; display: flex; min-width: 0; }
.app { width: 70px; height: 47px; padding: 0 1px; align-items: stretch; justify-content: flex-start; }
.face { flex: 1; display: flex; align-items: center; justify-content: center; box-sizing: border-box; }
.face svg { width: 38px; height: 38px; overflow: visible; }
.open .face, .stack .face, .triple .face { border: 1px solid #34485f; border-radius: 3px; box-shadow: inset 0 0 0 1px rgba(235, 243, 252, 0.75); background: linear-gradient(160deg, #d9e4f1, #b6c8dd 45%, #a4bad6 60%, #b3c8e1); }
.stack, .triple { position: relative; }
.stack .face { margin-right: 6px; }
.triple .face { margin-right: 9px; }
.stack::after, .triple::after { content: ""; position: absolute; top: 0; right: 2px; width: 5px; height: 45px; border: 1px solid #42566e; border-left: 0; border-radius: 0 3px 3px 0; box-shadow: inset -1px 0 #d4e1ef; }
.triple::after { width: 8px; background: linear-gradient(90deg, transparent 3px, #d4e1ef 3px, #d4e1ef 4px, #42566e 4px, #42566e 5px, transparent 5px); }
.glyph { font-family: "Open Sans", sans-serif; font-weight: 700; fill: #fff; }
.word-letter { font-size: 17px; }
.line-word { font-size: 10px; fill: #08a808; }
.sublime-letter { font-size: 21px; fill: #f7932a; }
.help-mark { font-size: 14px; }

.tray { display: flex; align-items: center; gap: 10px; color: #fff; font-size: 14px; line-height: 22px; }
.tray .language { width: 20px; margin-bottom: 4px; }
.tray .help { margin: 0 -2px 6px; }
.tray .options { margin-bottom: 2px; }
.tray .more { margin-right: 6px; }
.clock { flex-direction: column; width: 84px; }
.tray .show-desktop { width: 13px; height: 46px; box-sizing: border-box; margin-left: -6px; border: 1px solid #3f5268; background: linear-gradient(120deg, #b9c9dc, #6d85a4 60%, #8ea6c4); box-shadow: inset 1px 1px #c9d6e5; }
</style>
